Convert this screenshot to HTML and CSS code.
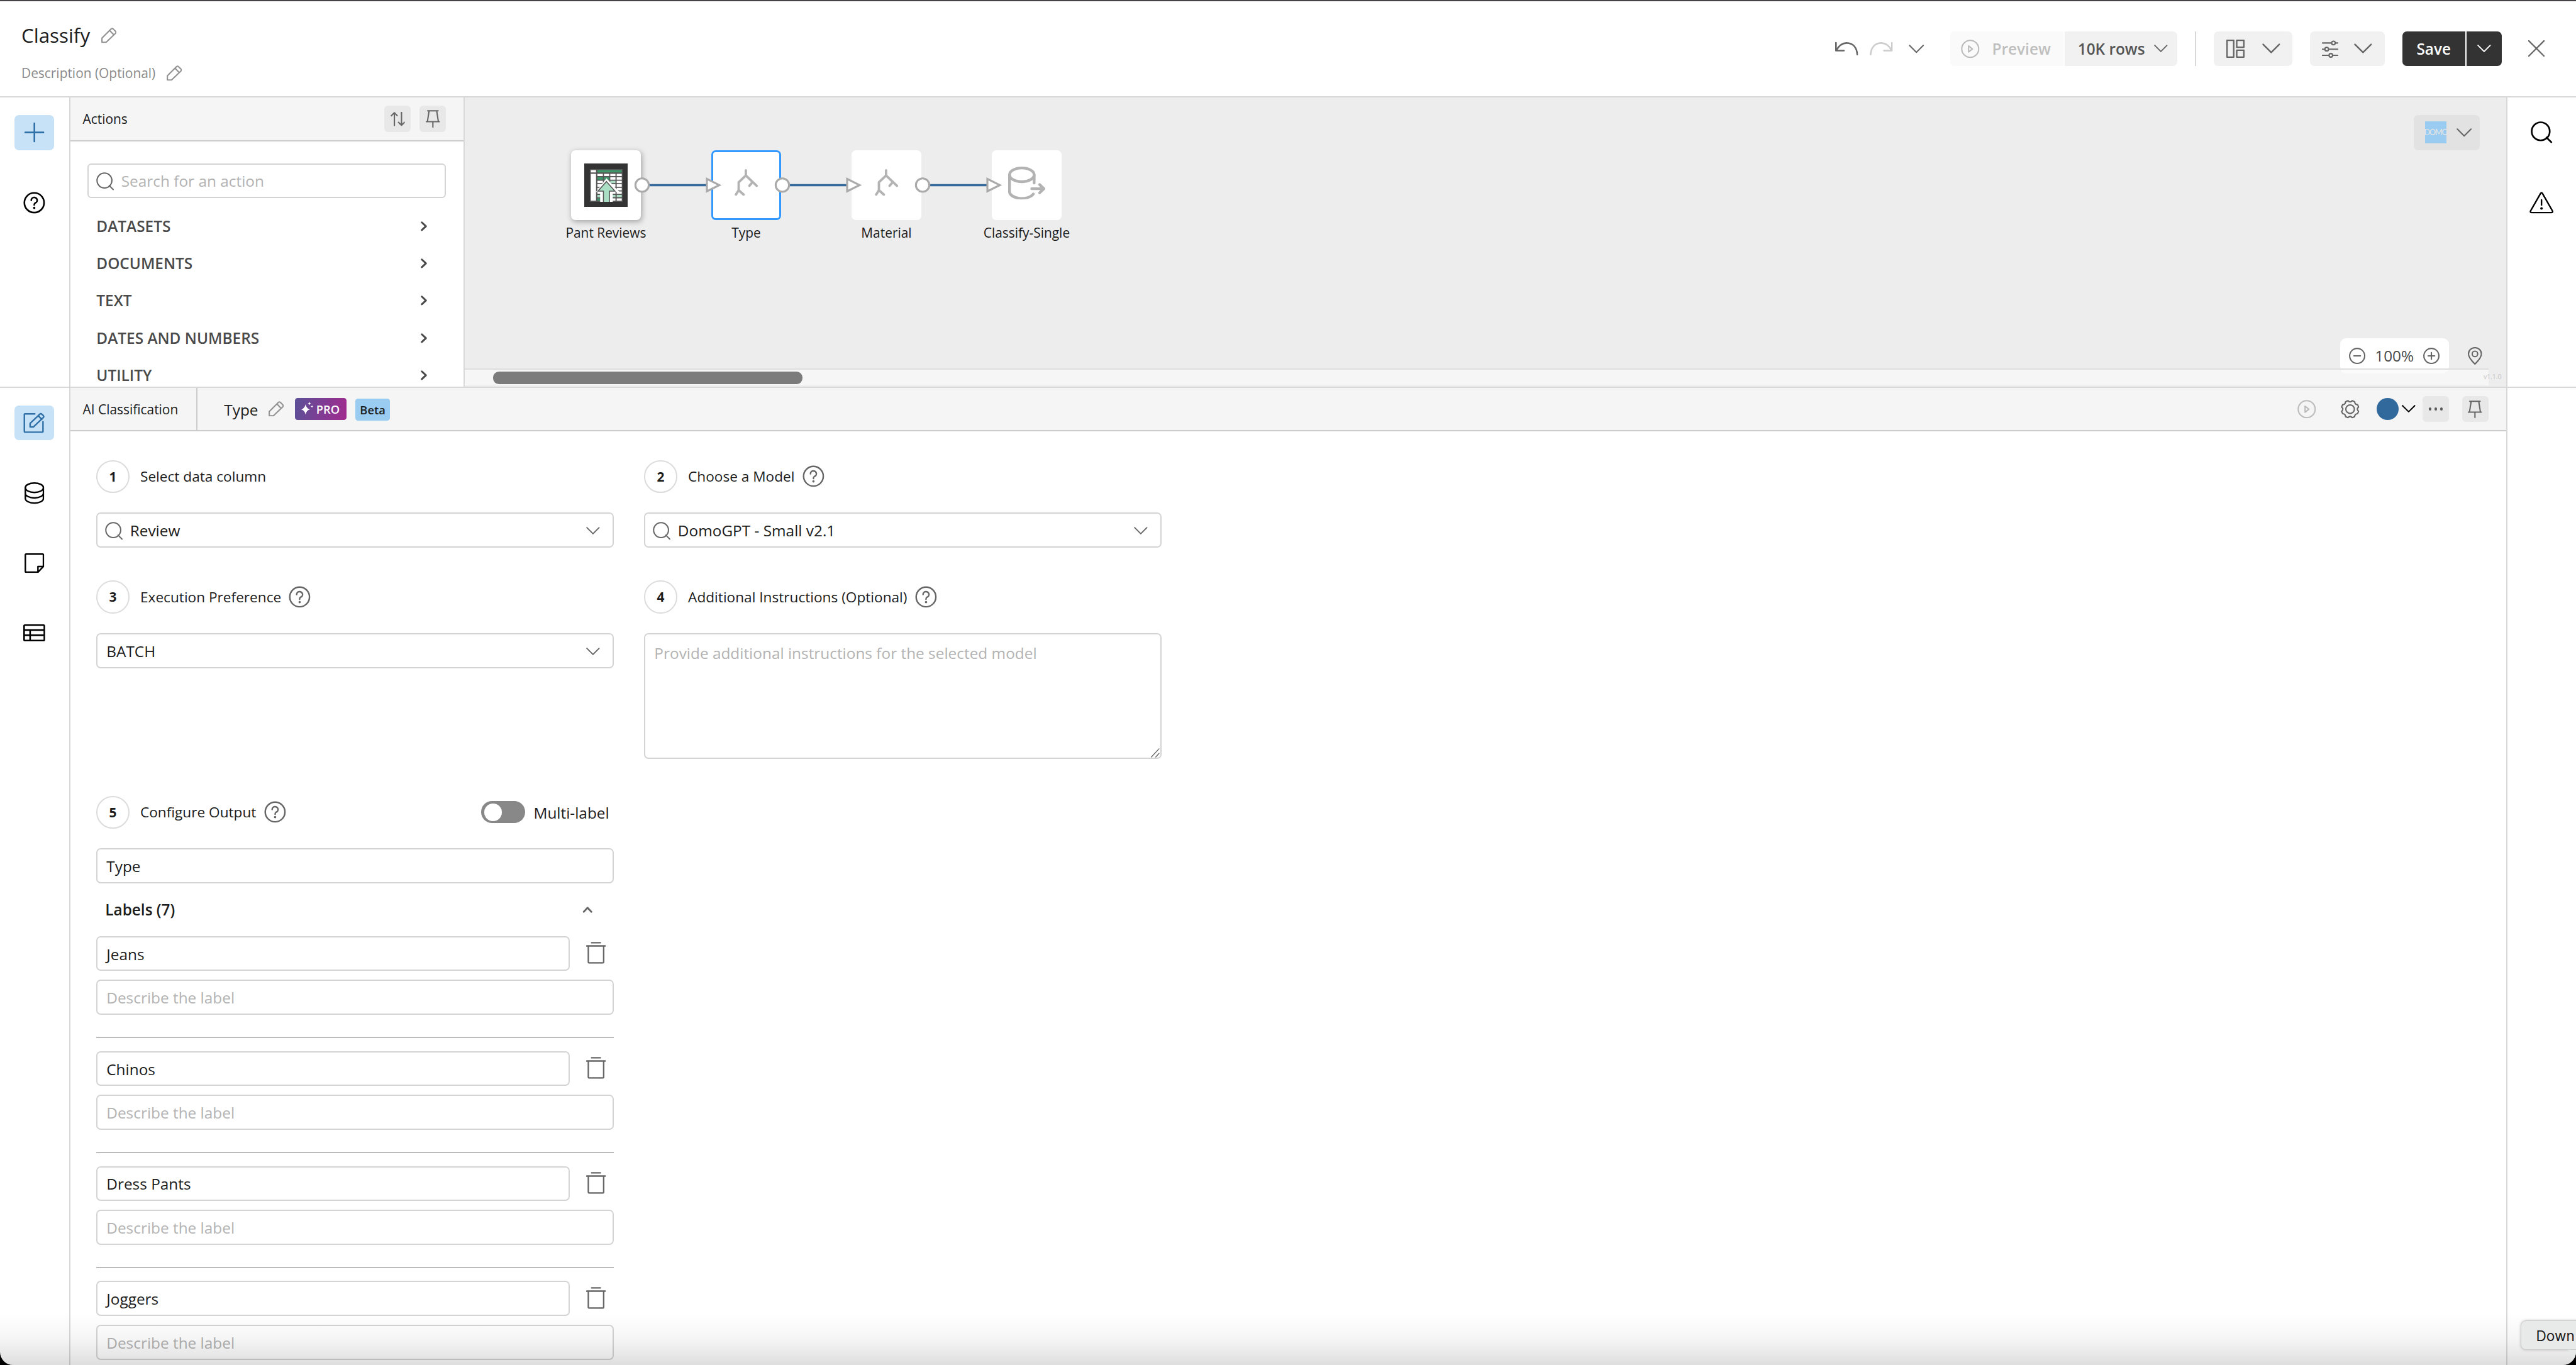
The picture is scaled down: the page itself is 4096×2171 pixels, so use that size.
FILE: index.html
```html
<!DOCTYPE html>
<html lang="en">
<head>
    <meta charset="UTF-8">
    <title>Classify</title>
    <link rel="stylesheet" href="styles.css">
</head>
<body>
    <!-- Icon sprite -->
    <svg class="sprite">
        <symbol id="pencil" viewBox="0 0 28 28"><path d="M1.3 26.7V19L18 2.2Q19.8.6 21.6 2.2L26 6.7Q27.4 8.5 26 10.2L9.5 26Q8.8 26.7 7.8 26.7ZM15.3 5.2L22.8 13"/></symbol>
        <symbol id="chevron" viewBox="0 0 28 16"><path d="M1.5 1.5L14 14L26.5 1.5"/></symbol>
        <symbol id="chevron-right" viewBox="0 0 12 18"><path d="M2 2L9.5 9L2 16"/></symbol>
        <symbol id="sort" viewBox="0 0 26 26"><path d="M7 25V1.5M1.5 7L7 1.5L12 6.5M20 .5V24M14.5 19L20 24.5L25.5 19"/></symbol>
        <symbol id="pin" viewBox="0 0 26 32"><path d="M3.5 1.5H22.5M6 2L3 21M20 2L23 21M1 21.3H25M13 21.5V31"/></symbol>
        <symbol id="search" viewBox="0 0 34 34"><path d="M24.5 25L32 32.5"/><circle cx="15.5" cy="15.5" r="14"/></symbol>
        <symbol id="plus" viewBox="0 0 36 36"><path d="M18 1V35M1 18H35"/></symbol>
        <symbol id="help" viewBox="-20 -20 40 40"><circle r="18"/><path d="M-5.4-4.4A5.4 5.2 0 1 1 1.8.4Q0 1.4 0 4"/><circle class="dot" cy="9.5" r="2.1"/></symbol>
        <symbol id="edit" viewBox="0 0 40 38"><path d="M21 2.5H3Q2 2.5 2 3.5V35Q2 36 3 36H35Q36 36 36 35V17M12.5 26.5V20L30 3.2Q32 1.4 34 3.2L36.5 5.7Q38 7.5 36.5 9.3L19 26Q18.3 26.5 17.5 26.5ZM27.5 6.3L33.8 12.6"/></symbol>
        <symbol id="database" viewBox="0 0 36 40"><ellipse cx="18" cy="10" rx="16.5" ry="8.6"/><path d="M1.5 10V29.5A16.5 8.6 0 0 0 34.5 29.5V10M1.5 20A16.5 8.6 0 0 0 34.5 20"/></symbol>
        <symbol id="note" viewBox="0 0 36 36"><path d="M3 1.5H33Q34.5 1.5 34.5 3V24L24.5 34.5H3Q1.5 34.5 1.5 33V3Q1.5 1.5 3 1.5ZM24.5 34V24H34"/></symbol>
        <symbol id="table" viewBox="0 0 40 31"><path d="M3 1.5H37Q38.5 1.5 38.5 3V28Q38.5 29.5 37 29.5H3Q1.5 29.5 1.5 28V3Q1.5 1.5 3 1.5ZM1.5 10.5H38.5M1.5 20H38.5M12.5 10.5V29.5"/></symbol>
        <symbol id="warning" viewBox="0 0 44 40"><path d="M20.3 3Q22 .6 23.7 3L42 35Q43 38 40 38H4Q1 38 2 35ZM22 15V24"/><circle class="dot" cx="22" cy="30.5" r="2.3"/></symbol>
        <symbol id="undo" viewBox="0 0 42 24"><path d="M1.5 1V15.5H16M2 15C8 4.5 15 1.6 21 1.6C33 1.8 39.5 10 40.5 23"/></symbol>
        <symbol id="play" viewBox="0 0 34 34"><circle cx="17" cy="17" r="15.5"/><path d="M14 11.5L21 17L14 22.5Z"/></symbol>
        <symbol id="layout" viewBox="0 0 34 34"><path d="M1.3 1.3H13.5V32H1.3ZM19 1.3H32V14H19ZM19 19.3H32V32H19Z"/></symbol>
        <symbol id="sliders" viewBox="0 0 30 32"><path d="M1 5H29M1 16.3H29M1 27.6H29"/><circle class="knob" cx="21" cy="5" r="3.3"/><circle class="knob" cx="8.7" cy="16.3" r="3.3"/><circle class="knob" cx="16.3" cy="27.6" r="3.3"/></symbol>
        <symbol id="close" viewBox="0 0 30 30"><path d="M1 1L29 29M29 1L1 29"/></symbol>
        <symbol id="minus-circle" viewBox="0 0 30 30"><circle cx="15" cy="15" r="13.7"/><path d="M9 15H21"/></symbol>
        <symbol id="plus-circle" viewBox="0 0 30 30"><circle cx="15" cy="15" r="13.7"/><path d="M9 15H21M15 9V21"/></symbol>
        <symbol id="location" viewBox="0 0 26 32"><path d="M13 31C8 26 1.2 19.5 1.2 12.5A11.8 11.4 0 0 1 24.8 12.5C24.8 19.5 18 26 13 31Z"/><circle cx="13" cy="12.5" r="5"/></symbol>
        <symbol id="gear" viewBox="-17 -17 34 34"><path d="M3.9-15.5L8.2-13.7Q8.5-8.5 13.7-8.2L15.5-3.9Q11 0 15.5 3.9L13.7 8.2Q8.5 8.5 8.2 13.7L3.9 15.5Q0 11-3.9 15.5L-8.2 13.7Q-8.5 8.5-13.7 8.2L-15.5 3.9Q-11 0-15.5-3.9L-13.7-8.2Q-8.5-8.5-8.2-13.7L-3.9-15.5Q0-11 3.9-15.5Z"/><circle r="7.8"/></symbol>
        <symbol id="trash" viewBox="0 0 36 40"><path d="M10 1.5H26M1 7.5H35M4 8V37Q4 38.5 5.5 38.5H30.5Q32 38.5 32 37V8"/></symbol>
        <symbol id="fork" viewBox="0 0 43 49"><path d="M20.6 2.3V11.5L7.5 24V38.5M20.6 11.5L33 23.5M7.5 38.5L2.5 46.5M7.5 38.5L16.5 46.5M33 23.5L27 30.5M33 23.5L40.5 30.5"/></symbol>
        <symbol id="output" viewBox="0 0 68 60"><ellipse cx="25" cy="15" rx="22.5" ry="12.5"/><path d="M2.5 15V45A22.5 12.5 0 0 0 46 50M47.5 15V30M43 40.3H65M57.5 32.8L65.3 40.3L57.5 47.8"/></symbol>
        <symbol id="sparkle" viewBox="0 0 28 30"><path d="M10 6Q12 16 20 18Q12 20 10 30Q8 20 0 18Q8 16 10 6ZM19 0Q19.5 3.500 23 4Q19.5 4.500 19 8Q18.500 4.500 15 4Q18.500 3.500 19 0ZM25 8Q25.400 10.600 28 11Q25.400 11.400 25 14Q24.600 11.400 22 11Q24.600 10.600 25 8Z"/></symbol>
    </svg>

    <div class="app">
        <!-- Top bar -->
        <header class="topbar">
            <div class="heading">
                <div class="title">Classify <svg class="icon i-pencil"><use href="#pencil"/></svg></div>
                <div class="description">Description (Optional) <svg class="icon i-pencil"><use href="#pencil"/></svg></div>
            </div>
            <div class="toolbar">
                <svg class="icon i-undo"><use href="#undo"/></svg>
                <svg class="icon i-undo redo"><use href="#undo"/></svg>
                <svg class="icon i-chevron history"><use href="#chevron"/></svg>
                <div class="button-group">
                    <div class="btn preview"><svg class="icon i-play"><use href="#play"/></svg>Preview</div>
                    <div class="btn rows">10K rows<svg class="icon i-chevron-sm"><use href="#chevron"/></svg></div>
                </div>
                <div class="divider"></div>
                <div class="btn layout-btn"><svg class="icon i-layout"><use href="#layout"/></svg><svg class="icon i-chevron-lg"><use href="#chevron"/></svg></div>
                <div class="btn sliders-btn"><svg class="icon i-sliders"><use href="#sliders"/></svg><svg class="icon i-chevron-lg"><use href="#chevron"/></svg></div>
                <div class="save-group">
                    <div class="save">Save</div>
                    <div class="save-more"><svg class="icon i-chevron-sm"><use href="#chevron"/></svg></div>
                </div>
                <svg class="icon i-close"><use href="#close"/></svg>
            </div>
        </header>

        <!-- Upper half: actions and flow canvas -->
        <div class="upper">
            <nav class="rail rail-left">
                <div class="rail-item active"><svg class="icon i-plus"><use href="#plus"/></svg></div>
                <div class="rail-item"><svg class="icon i-help"><use href="#help"/></svg></div>
            </nav>

            <aside class="actions">
                <div class="actions-header">
                    <span>Actions</span>
                    <div class="square-btn"><svg class="icon i-sort"><use href="#sort"/></svg></div>
                    <div class="square-btn"><svg class="icon i-pin"><use href="#pin"/></svg></div>
                </div>
                <div class="search-box"><svg class="icon i-search"><use href="#search"/></svg>Search for an action</div>
                <ul class="action-list">
                    <li>DATASETS<svg class="icon i-right"><use href="#chevron-right"/></svg></li>
                    <li>DOCUMENTS<svg class="icon i-right"><use href="#chevron-right"/></svg></li>
                    <li>TEXT<svg class="icon i-right"><use href="#chevron-right"/></svg></li>
                    <li>DATES AND NUMBERS<svg class="icon i-right"><use href="#chevron-right"/></svg></li>
                    <li>UTILITY<svg class="icon i-right"><use href="#chevron-right"/></svg></li>
                </ul>
            </aside>

            <div class="canvas">
                <div class="node node-1">
                    <div class="tile raised">
                        <svg class="sheet" viewBox="0 0 80 80">
                            <rect width="80" height="80" fill="#333"/>
                            <svg x="10" y="10" width="60" height="60" viewBox="0 0 60 60">
                                <rect width="60" height="60" fill="#555"/>
                                <g fill="#fff">
                                    <path d="M2 2H11.500V6.500H2ZM2 8.800H11.500V58H2Z"/>
                                    <path d="M14 8.800H24V13H14ZM26 8.800H35.500V13H26ZM37.500 8.800H47V13H37.500ZM49.200 8.800H58.500V13H49.200Z"/>
                                    <path d="M37.500 15H47V19.500H37.500ZM49.200 15H58.500V19.500H49.200Z"/>
                                    <path d="M14 21.500H24V26H14ZM26 21.500H35.500V26H26ZM49.200 21.500H58.500V26H49.200Z"/>
                                    <path d="M14 28H24V32.400H14ZM37.500 28H47V32.400H37.500ZM49.200 28H58.500V32.400H49.200Z"/>
                                    <path d="M14 34.400H24V39H14ZM37.500 34.400H47V39H37.500ZM49.200 34.400H58.500V39H49.200Z"/>
                                    <path d="M14 41H24V45.300H14ZM37.500 41H47V45.300H37.500ZM49.200 41H58.500V45.300H49.200Z"/>
                                    <path d="M14 47.300H24V51.500H14ZM37.500 53.700H47V58H37.500ZM49.200 53.700H58.500V58H49.200Z"/>
                                </g>
                                <path fill="#40976a" d="M14 2H58.500V6.500H14ZM14 15H24V19.500H14ZM26 15H35.500V19.500H26ZM14 53.700H24V58H14Z"/>
                                <path fill="#abdfc5" d="M37.500 21.500H47V26H37.500ZM14 47.300H24V51.500H14ZM37.500 47.300H47V51.500H37.500ZM49.200 47.300H58.500V51.500H49.200Z"/>
                                <path fill="#fff" d="M30.500 17L54 42H42V60H19V42H11.500Z"/>
                                <path fill="#abdfc5" stroke="#555" stroke-width="1.8" d="M30.500 23L46 40.500H36V66H25V40.500H15Z"/>
                            </svg>
                        </svg>
                    </div>
                    <span>Pant Reviews</span>
                </div>
                <div class="node node-2">
                    <div class="tile selected"><svg class="icon i-fork"><use href="#fork"/></svg></div>
                    <span>Type</span>
                </div>
                <div class="node node-3">
                    <div class="tile"><svg class="icon i-fork"><use href="#fork"/></svg></div>
                    <span>Material</span>
                </div>
                <div class="node node-4">
                    <div class="tile"><svg class="icon i-output"><use href="#output"/></svg></div>
                    <span>Classify-Single</span>
                </div>

                <!-- Links with their ports -->
                <svg class="links" viewBox="0 0 700 40">
                    <g id="link">
                        <path class="wire" d="M30 20H138"/>
                        <circle class="port" cx="19.500" cy="20" r="12.200"/>
                        <path class="port" d="M137.800 8.700V31.300L160.500 20Z"/>
                    </g>
                    <use href="#link" x="256"/>
                    <use href="#link" x="512"/>
                </svg>

                <div class="domo-btn"><span class="domo-logo">DOMO</span><svg class="icon i-chevron"><use href="#chevron"/></svg></div>
                <div class="zoom-box"><svg class="icon i-zoom"><use href="#minus-circle"/></svg><span>100%</span><svg class="icon i-zoom"><use href="#plus-circle"/></svg></div>
                <svg class="icon i-location"><use href="#location"/></svg>
                <div class="scroll-track"><div class="scroll-thumb"></div></div>
                <span class="version">v1.1.0</span>
            </div>

            <nav class="rail rail-right">
                <div class="rail-item"><svg class="icon i-search-lg"><use href="#search"/></svg></div>
                <div class="rail-item"><svg class="icon i-warning"><use href="#warning"/></svg></div>
            </nav>
        </div>

        <!-- Lower half: tile editor -->
        <div class="lower">
            <nav class="rail rail-left">
                <div class="rail-item active"><svg class="icon i-edit"><use href="#edit"/></svg></div>
                <div class="rail-item"><svg class="icon i-database"><use href="#database"/></svg></div>
                <div class="rail-item"><svg class="icon i-note"><use href="#note"/></svg></div>
                <div class="rail-item"><svg class="icon i-table"><use href="#table"/></svg></div>
            </nav>

            <main class="editor">
                <div class="editor-header">
                    <div class="editor-kind">AI Classification</div>
                    <span class="editor-name">Type</span>
                    <svg class="icon i-pencil"><use href="#pencil"/></svg>
                    <div class="badge-pro"><svg class="i-sparkle"><use href="#sparkle"/></svg>PRO</div>
                    <div class="badge-beta">Beta</div>
                    <div class="editor-tools">
                        <svg class="icon i-play"><use href="#play"/></svg>
                        <svg class="icon i-gear"><use href="#gear"/></svg>
                        <div class="color-dot"></div>
                        <svg class="icon i-chevron-dark"><use href="#chevron"/></svg>
                        <div class="square-btn dots"><i></i><i></i><i></i></div>
                        <div class="square-btn"><svg class="icon i-pin"><use href="#pin"/></svg></div>
                    </div>
                </div>

                <div class="form">
                    <section class="step">
                        <div class="step-head"><b>1</b>Select data column</div>
                        <div class="field"><svg class="icon i-search"><use href="#search"/></svg>Review<svg class="icon i-chevron-sm caret"><use href="#chevron"/></svg></div>
                    </section>
                    <section class="step">
                        <div class="step-head"><b>2</b>Choose a Model<svg class="icon i-help"><use href="#help"/></svg></div>
                        <div class="field"><svg class="icon i-search"><use href="#search"/></svg>DomoGPT - Small v2.1<svg class="icon i-chevron-sm caret"><use href="#chevron"/></svg></div>
                    </section>
                    <section class="step">
                        <div class="step-head"><b>3</b>Execution Preference<svg class="icon i-help"><use href="#help"/></svg></div>
                        <div class="field">BATCH<svg class="icon i-chevron-sm caret"><use href="#chevron"/></svg></div>
                    </section>
                    <section class="step">
                        <div class="step-head"><b>4</b>Additional Instructions (Optional)<svg class="icon i-help"><use href="#help"/></svg></div>
                        <div class="textarea">Provide additional instructions for the selected model
                            <svg class="icon resize" viewBox="0 0 18 18"><path d="M2 16L16 1M10 16L16 9.500"/></svg>
                        </div>
                    </section>
                    <section class="step output">
                        <div class="step-head"><b>5</b>Configure Output<svg class="icon i-help"><use href="#help"/></svg>
                            <div class="toggle"></div><span class="toggle-label">Multi-label</span>
                        </div>
                        <div class="field">Type</div>
                        <div class="labels-head">Labels (7)<svg class="icon i-up"><use href="#chevron-right"/></svg></div>
                        <div class="label-item">
                            <div class="label-row"><div class="field">Jeans</div><svg class="icon i-trash"><use href="#trash"/></svg></div>
                            <div class="field placeholder">Describe the label</div>
                        </div>
                        <div class="label-item">
                            <div class="label-row"><div class="field">Chinos</div><svg class="icon i-trash"><use href="#trash"/></svg></div>
                            <div class="field placeholder">Describe the label</div>
                        </div>
                        <div class="label-item">
                            <div class="label-row"><div class="field">Dress Pants</div><svg class="icon i-trash"><use href="#trash"/></svg></div>
                            <div class="field placeholder">Describe the label</div>
                        </div>
                        <div class="label-item">
                            <div class="label-row"><div class="field">Joggers</div><svg class="icon i-trash"><use href="#trash"/></svg></div>
                            <div class="field placeholder">Describe the label</div>
                        </div>
                    </section>
                </div>
            </main>

            <nav class="rail rail-right"></nav>
        </div>

        <div class="bottom-shade"></div>
        <div class="dock-tip">Down
            <svg class="dock-tail" viewBox="0 0 30 30"><path d="M0 0Q5 2 8 8L18 26L30 30V0Z"/></svg>
        </div>
    </div>
</body>
</html>
```
FILE: styles.css
```css
/* Reset and base styles. 1rem is 10 design pixels */
* {
    margin: 0;
    padding: 0;
    box-sizing: border-box;
}

html {
    font-size: 8.7112px;
}

body {
    background: #000;
    color: #1c1c1c;
    font-family: "Open Sans", "Noto Sans", sans-serif;
    font-size: 2.8rem;
    line-height: 1.3;
    overflow: hidden;
}

.app {
    position: relative;
    display: flex;
    flex-direction: column;
    width: 100vw;
    height: 100vh;
    background: #fff;
    border-radius: 0 0 2.4rem 2.4rem;
    overflow: hidden;
}

.sprite {
    display: none;
}

/* Icons */
.icon {
    display: block;
    flex: none;
    fill: none;
    stroke: #666;
    stroke-width: 2.4;
    stroke-linecap: round;
    stroke-linejoin: round;
    overflow: visible;
}

.dot {
    fill: currentColor;
    stroke: none;
}

.knob {
    fill: #f1f1f1;
}

.i-pencil { width: 2.8rem; height: 2.8rem; stroke: #929292; }
.i-undo { width: 4.2rem; height: 2.4rem; stroke-width: 3; }
.i-chevron { width: 2.8rem; height: 1.6rem; }
.i-chevron-sm { width: 2.5rem; height: 1.43rem; stroke-width: 2.5; }
.i-chevron-lg { width: 3.3rem; height: 1.9rem; }
.i-chevron-dark { width: 2.5rem; height: 1.43rem; stroke: #000; stroke-width: 2.6; }
.i-right { width: 1.2rem; height: 1.8rem; stroke: #4a4a4a; stroke-width: 3.4; }
.i-up { width: 1.2rem; height: 1.8rem; stroke-width: 3.2; transform: rotate(-90deg); }
.i-play { width: 3.4rem; height: 3.4rem; stroke: #bbb; }
.i-layout { width: 3.4rem; height: 3.4rem; stroke-width: 2.7; }
.i-sliders { width: 3rem; height: 3.2rem; }
.i-close { width: 3rem; height: 3rem; stroke-width: 2.6; }
.i-plus { width: 3.6rem; height: 3.6rem; stroke: #2f71a8; stroke-width: 3; }
.i-help { width: 4rem; height: 4rem; color: #666; stroke-width: 2.8; }
.i-search { width: 3.3rem; height: 3.3rem; }
.i-search-lg { width: 4rem; height: 4rem; stroke: #000; stroke-width: 2.6; }
.i-sort { width: 2.6rem; height: 2.6rem; }
.i-pin { width: 2.6rem; height: 3.2rem; }
.i-edit { width: 4rem; height: 3.8rem; stroke: #2f71a8; stroke-width: 2.8; }
.i-database { width: 3.6rem; height: 4rem; stroke: #000; stroke-width: 2.8; }
.i-note { width: 3.6rem; height: 3.6rem; stroke: #000; stroke-width: 2.8; }
.i-table { width: 4rem; height: 3.1rem; stroke: #000; stroke-width: 3; }
.i-warning { width: 4.4rem; height: 4rem; stroke: #000; color: #000; stroke-width: 2.8; }
.i-zoom { width: 3rem; height: 3rem; }
.i-gear { width: 3.4rem; height: 3.4rem; }
.i-trash { width: 3.6rem; height: 4rem; margin-bottom: 0.3rem; stroke-width: 2.7; }
.i-fork { width: 4.3rem; height: 4.9rem; stroke: #b3b3b3; stroke-width: 4.4; }
.i-output { width: 6.8rem; height: 6rem; stroke: #b3b3b3; stroke-width: 5; }
.i-sparkle { width: 2.2rem; height: 2.36rem; margin-top: -0.4rem; fill: #fff; }

/* Top bar */
.topbar {
    display: flex;
    justify-content: space-between;
    flex: none;
    height: 17.8rem;
    border-top: 2px solid #454345;
    border-bottom: 2px solid #d8d8d8;
}

.heading {
    padding: 3.7rem 0 0 3.9rem;
}

.title {
    display: flex;
    align-items: center;
    gap: 2rem;
    height: 5rem;
    font-size: 3.6rem;
}

.description {
    display: flex;
    align-items: center;
    gap: 2rem;
    height: 4rem;
    margin-top: 2.4rem;
    font-size: 2.4rem;
    color: #8a8a8a;
}

.toolbar {
    display: flex;
    align-items: center;
    padding-right: 5.7rem;
}

.redo {
    margin-left: 2.2rem;
    stroke: #ccc;
    transform: scaleX(-1);
}

.history {
    margin-left: 2.9rem;
}

.button-group {
    display: flex;
    gap: 2px;
    margin-left: 4.8rem;
    border-radius: 0.8rem;
    overflow: hidden;
}

.btn {
    display: flex;
    align-items: center;
    height: 6.4rem;
    background: #f1f1f1;
    color: #555;
    font-weight: 600;
}

.preview {
    width: 20.6rem;
    padding-left: 1.9rem;
    gap: 2.3rem;
    background: #fafafa;
    color: #bfbfbf;
}

.rows {
    width: 20.6rem;
    padding-left: 2.4rem;
    gap: 1.6rem;
}

.divider {
    width: 2px;
    height: 6.4rem;
    margin: 0 3.2rem;
    background: #d8d8d8;
}

.layout-btn {
    width: 14.4rem;
    padding-left: 2.3rem;
    gap: 3.1rem;
    border-radius: 0.8rem;
}

.sliders-btn {
    width: 13.6rem;
    margin: 0 3.2rem;
    padding-left: 2.1rem;
    gap: 2.9rem;
    border-radius: 0.8rem;
}

.save-group {
    display: flex;
    gap: 2px;
    margin-right: 4.9rem;
    border-radius: 0.8rem;
    overflow: hidden;
    color: #fff;
    font-weight: 600;
}

.save,
.save-more {
    display: flex;
    align-items: center;
    justify-content: center;
    height: 6.4rem;
    background: #333;
}

.save {
    width: 11.5rem;
}

.save-more {
    width: 6.4rem;
}

.save-more .icon {
    stroke: #fff;
}

/* Side rails */
.rail {
    display: flex;
    flex-direction: column;
    align-items: center;
    gap: 6.4rem;
    flex: none;
    width: 12.8rem;
    padding-top: 3.2rem;
}

.rail-left {
    border-right: 2px solid #d8d8d8;
}

.rail-right {
    border-left: 2px solid #d8d8d8;
}

.rail-item {
    display: flex;
    align-items: center;
    justify-content: center;
    width: 7.2rem;
    height: 6.4rem;
    border-radius: 0.8rem;
}

.rail-item.active {
    background: #c7e2f6;
}

.rail .i-help {
    stroke: #000;
    color: #000;
    stroke-width: 3;
}

/* Upper half */
.upper {
    display: flex;
    flex: none;
    height: 53rem;
    border-bottom: 2px solid #d8d8d8;
}

.actions {
    flex: none;
    width: 72rem;
    border-right: 2px solid #d8d8d8;
    overflow: hidden;
}

.actions-header {
    display: flex;
    align-items: center;
    gap: 1.6rem;
    height: 8rem;
    padding: 0.1rem 3.2rem 0 2.3rem;
    background: #f5f5f5;
    border-bottom: 2px solid #ccc;
    font-size: 2.4rem;
}

.actions-header span {
    flex: 1;
}

.square-btn {
    display: flex;
    align-items: center;
    justify-content: center;
    width: 4.8rem;
    height: 4.8rem;
    background: #e8e8e8;
    border-radius: 0.7rem;
}

.search-box {
    display: flex;
    align-items: center;
    gap: 1.3rem;
    height: 6.4rem;
    margin: 4rem 3.2rem 0 3.2rem;
    padding: 0.2rem 0 0 1.3rem;
    border: 2px solid #d4d4d4;
    border-radius: 0.7rem;
    color: #b3b3b3;
}

.action-list {
    margin-top: 1.7rem;
    list-style: none;
    color: #4a4a4a;
    font-weight: 600;
}

.action-list li {
    display: flex;
    align-items: center;
    justify-content: space-between;
    height: 6.8rem;
    padding: 0 6.6rem 0 4.8rem;
}

/* Flow canvas */
.canvas {
    position: relative;
    flex: 1;
    background: #ededed;
}

.node {
    position: absolute;
    top: 9.6rem;
    display: flex;
    flex-direction: column;
    align-items: center;
    width: 25.6rem;
    font-size: 2.4rem;
}

.node-1 { left: 13rem; }
.node-2 { left: 38.6rem; }
.node-3 { left: 64.2rem; }
.node-4 { left: 89.8rem; }

.tile {
    display: flex;
    align-items: center;
    justify-content: center;
    width: 12.8rem;
    height: 12.8rem;
    margin-bottom: 0.8rem;
    background: #fff;
    border-radius: 0.8rem;
}

.tile.raised {
    box-shadow: 0.2rem 0.3rem 1rem rgba(0, 0, 0, 0.3);
}

.tile.selected {
    border: 0.4rem solid #3399ff;
}

.tile .i-fork {
    margin-bottom: 1rem;
}

.tile .i-output {
    margin-bottom: 0.8rem;
}

.sheet {
    width: 8rem;
    height: 8rem;
}

.links {
    position: absolute;
    left: 30.4rem;
    top: 14rem;
    width: 70rem;
    height: 4rem;
    overflow: visible;
}

.wire {
    stroke: #33699d;
    stroke-width: 4;
}

.port {
    fill: #fff;
    stroke: #aaa;
    stroke-width: 3.6;
}

.domo-btn {
    position: absolute;
    top: 3.2rem;
    right: 4.8rem;
    display: flex;
    align-items: center;
    gap: 1.8rem;
    width: 12rem;
    height: 6.4rem;
    padding-left: 2rem;
    background: #e2e2e2;
    border-radius: 0.8rem;
}

.domo-logo {
    display: flex;
    align-items: center;
    justify-content: center;
    width: 4rem;
    height: 4rem;
    background: #99ccf0;
    color: #e6e6e6;
    font-family: Lato, sans-serif;
    font-size: 1.45rem;
    letter-spacing: -0.13rem;
}

.zoom-box {
    position: absolute;
    right: 10.4rem;
    top: 44rem;
    display: flex;
    align-items: center;
    justify-content: space-between;
    width: 19.9rem;
    height: 6.4rem;
    padding: 0 1.7rem;
    background: #fff;
    border-radius: 1.1rem;
    color: #4a4a4a;
}

.i-location {
    position: absolute;
    right: 4.3rem;
    top: 45.6rem;
    width: 2.6rem;
    height: 3.2rem;
}

.scroll-track {
    position: absolute;
    left: 0;
    right: 3.2rem;
    bottom: 0.2rem;
    height: 3.1rem;
    padding: 0.4rem 0 0 5.2rem;
    background: rgba(250, 250, 250, 0.7);
    border-top: 2px solid #dedede;
}

.scroll-thumb {
    width: 56.5rem;
    height: 2.2rem;
    background: #7b7b7b;
    border-radius: 1.1rem;
}

.version {
    position: absolute;
    right: 0.8rem;
    bottom: 0.9rem;
    color: #c4c4c4;
    font-size: 1.2rem;
}

/* Lower half */
.lower {
    display: flex;
    flex: 1;
    min-height: 0;
}

.editor {
    flex: 1;
    overflow: hidden;
}

.editor-header {
    display: flex;
    align-items: center;
    height: 8rem;
    background: #f5f5f5;
    border-bottom: 2px solid #ccc;
}

.editor-kind {
    display: flex;
    align-items: center;
    align-self: stretch;
    width: 23.2rem;
    padding: 0.2rem 0 0 2.3rem;
    border-right: 2px solid #ccc;
    font-size: 2.4rem;
}

.editor-name {
    margin: 0.2rem 1.9rem 0 4.9rem;
}

.badge-pro {
    display: flex;
    align-items: center;
    gap: 0.5rem;
    width: 9.4rem;
    height: 4rem;
    margin-left: 2rem;
    padding-left: 1.2rem;
    background: linear-gradient(100deg, #5b5097, #a12b8f);
    border-radius: 0.5rem;
    color: #fff;
    font-size: 2.1rem;
    font-weight: 600;
}

.badge-beta {
    width: 6.4rem;
    height: 4rem;
    margin: 0.2rem 0 0 1.6rem;
    background: #99ccf0;
    border-radius: 0.5rem;
    font-size: 2.1rem;
    font-weight: 600;
    line-height: 4.1rem;
    text-align: center;
}

.editor-tools {
    display: flex;
    align-items: center;
    margin-left: auto;
    padding-right: 3.2rem;
}

.editor-tools .i-gear {
    margin: 0 3.1rem 0 4.6rem;
}

.color-dot {
    width: 4rem;
    height: 4rem;
    margin-right: 0.6rem;
    background: #32699d;
    border-radius: 50%;
}

.dots {
    gap: 0.5rem;
    margin: 0 2.4rem 0 1.3rem;
}

.dots i {
    width: 0.5rem;
    height: 0.5rem;
    background: #5a5a5a;
    border-radius: 50%;
}

/* Form */
.form {
    display: grid;
    grid-template-columns: 94.4rem 94.4rem;
    gap: 6rem 5.6rem;
    padding: 5.2rem 4.8rem 0;
}

.step.output {
    padding-top: 0.7rem;
}

.step-head {
    display: flex;
    align-items: center;
    height: 6rem;
    margin-bottom: 3.6rem;
    font-size: 2.6rem;
}

.step-head b {
    width: 6rem;
    height: 6rem;
    margin-right: 2rem;
    border: 2px solid #dcdcdc;
    border-radius: 50%;
    font-size: 2.4rem;
    line-height: 5.7rem;
    text-align: center;
}

.step-head .i-help {
    margin-left: 1.4rem;
}

.field {
    display: flex;
    align-items: center;
    height: 6.4rem;
    padding: 0.2rem 1.7rem 0 1.6rem;
    border: 2px solid #d4d4d4;
    border-radius: 0.8rem;
}

.field .i-search {
    margin: 0 1.3rem 0 -0.3rem;
}

.caret {
    margin: 0 0.6rem 0 auto;
}

.placeholder {
    color: #b3b3b3;
}

.textarea {
    position: relative;
    height: 23rem;
    padding: 1.6rem 1.6rem;
    border: 2px solid #d4d4d4;
    border-radius: 0.8rem;
    color: #b3b3b3;
}

.resize {
    position: absolute;
    right: 0;
    bottom: 0;
    width: 1.8rem;
    height: 1.8rem;
    stroke-width: 1.6;
}

.toggle {
    width: 8rem;
    height: 4rem;
    margin-left: auto;
    padding: 0.4rem 0.6rem;
    background: #888;
    border-radius: 2rem;
}

.toggle::before {
    content: "";
    display: block;
    width: 3.2rem;
    height: 3.2rem;
    background: #fff;
    border-radius: 50%;
}

.toggle-label {
    margin: 0.2rem 0.8rem 0 1.6rem;
    font-size: 2.8rem;
}

.labels-head {
    display: flex;
    align-items: center;
    justify-content: space-between;
    height: 9.6rem;
    padding: 0.1rem 4.2rem 0 1.6rem;
    font-weight: 600;
}

.label-item {
    height: 18.6rem;
    margin-bottom: 2.4rem;
    border-bottom: 2px solid #bbb;
}

.label-row {
    display: flex;
    align-items: center;
    gap: 3rem;
    margin-bottom: 1.6rem;
}

.label-row .field {
    width: 86.4rem;
}

/* Screen edge */
.bottom-shade {
    position: absolute;
    left: 0;
    right: 0;
    bottom: 0;
    height: 9.5rem;
    background: linear-gradient(rgba(0, 0, 0, 0), rgba(0, 0, 0, 0.04) 50%, rgba(0, 0, 0, 0.13));
}

.dock-tip {
    position: absolute;
    right: -2rem;
    bottom: 2.7rem;
    width: 12.1rem;
    height: 5.5rem;
    padding-left: 2.7rem;
    background: #e8eaea;
    border: 1px solid #ccc;
    border-radius: 1rem;
    box-shadow: 0 0 0.5rem rgba(0, 0, 0, 0.2);
    font-family: Inter, sans-serif;
    font-size: 2.6rem;
    line-height: 5.4rem;
}

.dock-tail {
    position: absolute;
    left: 8.4rem;
    top: 5.3rem;
    width: 3rem;
    height: 3rem;
    fill: #e8eaea;
}
```
